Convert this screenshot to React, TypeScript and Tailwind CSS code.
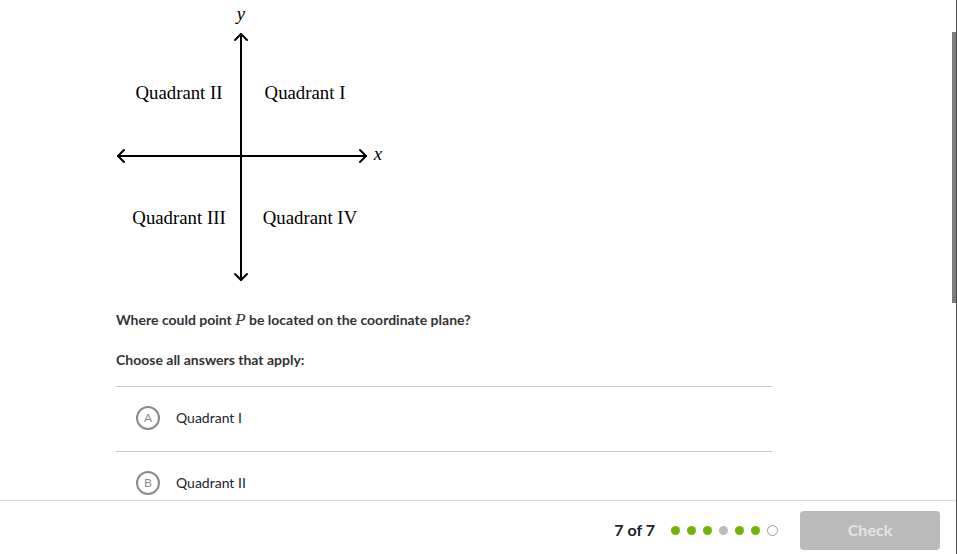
import React from 'react';

const choices = [
  { letter: 'A', label: 'Quadrant I' },
  { letter: 'B', label: 'Quadrant II' },
];

const dots = ['done', 'done', 'done', 'skip', 'done', 'done', 'current'];

function Plane() {
  return (
    <svg width="300" height="292" viewBox="100 0 300 292" className="block">
      <g stroke="#000" strokeWidth="2" fill="none" strokeLinecap="round" strokeLinejoin="round">
        <line x1="241" y1="34" x2="241" y2="280" />
        <line x1="118" y1="156" x2="366" y2="156" />
        <polyline points="235,40 241,34 247,40" />
        <polyline points="235,274 241,280 247,274" />
        <polyline points="124,150 118,156 124,162" />
        <polyline points="360,150 366,156 360,162" />
      </g>
      <g fontFamily='"Liberation Serif", "Times New Roman", serif' fontSize="18.8" fill="#000" textAnchor="middle">
        <text x="241" y="20" fontStyle="italic">y</text>
        <text x="378" y="160" fontStyle="italic">x</text>
        <text x="179" y="99">Quadrant II</text>
        <text x="305" y="99">Quadrant I</text>
        <text x="179" y="224">Quadrant III</text>
        <text x="310" y="224">Quadrant IV</text>
      </g>
    </svg>
  );
}

export default function App() {
  return (
    <div
      className="relative flex h-[554px] w-[957px] flex-col overflow-hidden border-r border-[#4a4a4a] bg-white text-[#21242c]"
      style={{ fontFamily: 'Lato, "Open Sans", sans-serif' }}
    >
      <div className="relative h-[500px] overflow-hidden">
        <div className="pl-[100px]">
          <Plane />
        </div>
        <div className="pl-[116px] pt-[18px] w-[772px]">
          <p className="text-[14px] font-bold leading-5 text-[#333]">
            Where could point{' '}
            <span className="font-['Liberation_Serif',serif] text-[17px] italic font-normal">P</span> be located on the
            coordinate plane?
          </p>
          <p className="mt-[20px] text-[14px] font-bold leading-5 text-[#333]">Choose all answers that apply:</p>
          <div className="mt-[16px] border-t border-[#c8c8c8]">
            {choices.map((c) => (
              <div key={c.letter} className="flex h-[65px] items-center border-b border-[#c8c8c8] pb-[3px] pl-[20px]">
                <span className="flex h-[24px] w-[24px] items-center justify-center rounded-full border-2 border-[#8b8b8b] text-[12px] text-[#8b8b8b]">
                  {c.letter}
                </span>
                <span className="ml-[16px] text-[14px]">{c.label}</span>
              </div>
            ))}
          </div>
        </div>
        <div className="absolute right-0 top-[32px] h-[271px] w-[4px] bg-[#7d7d7d]" />
      </div>
      <div className="flex h-[54px] items-center justify-end border-t border-[#d6d6d6] pr-[16px] pt-[5px]">
        <span className="text-[16px] font-bold text-[#21242c]">7 of 7</span>
        <div className="ml-[16px] flex items-center gap-[7px]">
          {dots.map((d, i) => (
            <span
              key={i}
              className={
                d === 'done'
                  ? 'h-[9px] w-[9px] rounded-full bg-[#71b307]'
                  : d === 'skip'
                    ? 'h-[9px] w-[9px] rounded-full bg-[#bbbbbb]'
                    : 'h-[11px] w-[11px] rounded-full border-[1.5px] border-[#999]'
              }
            />
          ))}
        </div>
        <button className="ml-[22px] h-[39px] w-[140px] rounded-[4px] bg-[#bababa] text-[16px] font-bold text-[#e4e4e4]">
          Check
        </button>
      </div>
    </div>
  );
}
